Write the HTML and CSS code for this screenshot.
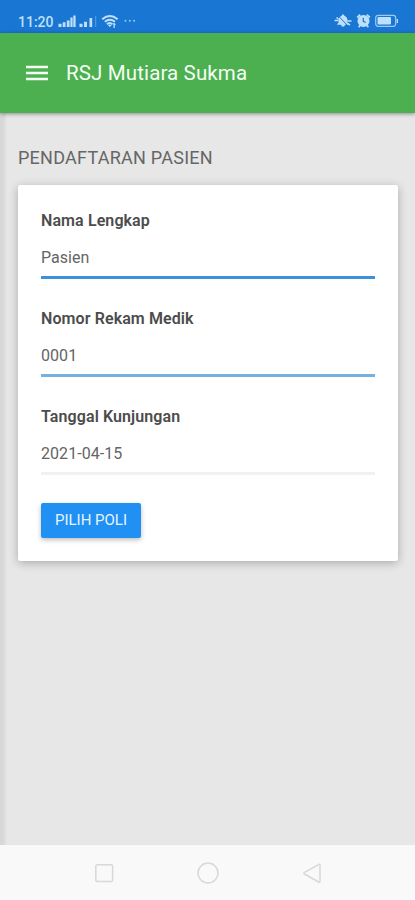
FILE: index.html
```html
<!DOCTYPE html>
<html lang="id">
<head>
<meta charset="utf-8">
<meta name="viewport" content="width=device-width, initial-scale=1">
<title>RSJ Mutiara Sukma</title>
<link rel="stylesheet" href="styles.css">
</head>
<body>
<div class="screen">
  <div class="status">
    <span class="clock">11:20</span>
    <svg class="signals" width="80" height="16" viewBox="0 0 80 16" fill="currentColor">
      <path d="M.5 10.800h3V14h-3zM4.700 9.300h2.800V14H4.700zM8.800 7.500h2.800V14H8.800zM12.400 4.500h2.200V14h-2.200zM15.300 2.500h2.300V14h-2.300z"/>
      <path d="M21.500 10.800h3V14h-3zM26 8.800h3V14h-3zM31.500 5h2.700v9h-2.700z"/>
      <path d="M37.200 3h1v11h-1z" opacity=".4"/>
      <g fill="none" stroke="currentColor" stroke-width="2">
        <path d="M44.200 6.200q7.700-6.400 15.400 0M46.800 8.800q5.100-4.200 10.200 0M49 11.200q2.900-2.400 5.400 0"/>
      </g>
      <path d="M50 12.200q1.800-1.400 3.600 0L51.800 14zM56 9.500l2 2.200h-1.200V15h-1.300v-3.500H54.500z"/>
      <g opacity=".75"><circle cx="67.500" cy="7.800" r="1"/><circle cx="71.800" cy="7.800" r="1"/><circle cx="76.100" cy="7.800" r="1"/></g>
    </svg>
    <svg class="system" width="66" height="16" viewBox="0 0 66 16">
      <path d="M10 1.500c.9 0 1.300.5 1.300 1.200 2 .8 3.200 2.300 3.200 4.300v2.500l1.500 2.300H12q-.3 2-2 2t-2-2H4L5.500 9.500V7c0-2 1.200-3.500 3.200-4.300 0-.7.400-1.200 1.300-1.200z" fill="currentColor"/>
      <path d="M4.500 2l11 11.500" stroke="#1976d2" stroke-width="1"/>
      <path d="M1.500 7.500H5.500M14.500 8h4M3.500 4.500l2 1.500M14.500 10.500l2.500 1.500" stroke="currentColor" stroke-width="1.500"/>
      <circle cx="30.500" cy="8" r="6" fill="currentColor"/>
      <path d="M24.200 4.500l3-2.800M33.800 1.700l3 2.800M27 12.500l-1.300 1.800M34 12.500l1.300 1.800" stroke="currentColor" stroke-width="1.800"/>
      <path d="M30.300 4.800v3.500l2.400 1.200" fill="none" stroke="#1976d2" stroke-width="1.200"/>
      <rect x="42.700" y="2.300" width="20" height="11" rx="2.500" fill="none" stroke="currentColor" stroke-width="1.200" opacity=".8"/>
      <rect x="44.500" y="4" width="13.500" height="7.600" rx="1" fill="currentColor"/>
      <path d="M64.300 6v4" stroke="currentColor" stroke-width="1.300"/>
    </svg>
  </div>
  <header class="appbar">
    <svg class="menu" width="22" height="16" viewBox="0 0 22 16"><path d="M0 2h22M0 8h22M0 14h22" stroke="#f4fff4" stroke-width="2.300"/></svg>
    <span class="title">RSJ Mutiara Sukma</span>
  </header>
  <main class="content">
    <h1 class="heading">PENDAFTARAN PASIEN</h1>
    <form class="card">
      <div class="field">
        <span class="label">Nama Lengkap</span>
        <div class="value">Pasien</div>
      </div>
      <div class="field">
        <span class="label">Nomor Rekam Medik</span>
        <div class="value value-record">0001</div>
      </div>
      <div class="field">
        <span class="label">Tanggal Kunjungan</span>
        <div class="value value-date">2021-04-15</div>
      </div>
      <button class="button" type="button">PILIH POLI</button>
    </form>
  </main>
  <nav class="navbar">
    <svg width="24" height="24" viewBox="0 0 24 24"><rect x="3.800" y="3.800" width="16.800" height="16.800" rx="1.500"/></svg>
    <svg width="24" height="24" viewBox="0 0 24 24"><circle cx="12" cy="12" r="10"/></svg>
    <svg width="24" height="24" viewBox="0 0 24 24"><path d="M18.500 3.600Q20 2.700 20 4.200V20.300Q20 21.800 18.500 21L4.500 13Q3.200 12.200 4.500 11.400Z"/></svg>
  </nav>
</div>
</body>
</html>
```
FILE: styles.css
```css
* {
  box-sizing: border-box;
}

body {
  margin: 0;
  font-family: Roboto, "Liberation Sans", sans-serif;
}

svg {
  display: block;
  flex: none;
}

.screen {
  display: flex;
  flex-direction: column;
  height: 900px;
  overflow: hidden;
  background: #e7e7e7;
}

.status {
  display: flex;
  align-items: flex-start;
  height: 33px;
  padding: 13px 16px 0 18px;
  background: #1976d2;
  color: #bfe0fa;
}

.clock {
  width: 40px;
  padding-top: 1px;
  font-size: 14px;
  font-weight: 500;
  line-height: 17px;
}

.system {
  margin-left: auto;
}

.appbar {
  display: flex;
  align-items: center;
  gap: 18px;
  height: 80px;
  padding-left: 26px;
  background: #4caf50;
  color: #f4fff4;
  box-shadow: 0 1px 4px rgba(0, 0, 0, 0.4);
  z-index: 1;
}

.title {
  font-size: 20.500px;
  line-height: 24px;
  letter-spacing: 0.13px;
}

.content {
  flex: 1;
  padding: 33px 17px 0 18px;
  background: linear-gradient(to right, #d7d7d7 0, #dadada 4px, #e7e7e7 7px);
}

.heading {
  margin: 0 0 15px;
  font-size: 18px;
  font-weight: 400;
  line-height: 24px;
  letter-spacing: 0.25px;
  color: #666;
  white-space: nowrap;
}

.card {
  height: 376px;
  padding: 23px 23px 0;
  border-radius: 2px;
  background: #fff;
  box-shadow: 0 2px 10px rgba(0, 0, 0, 0.27);
}

.field {
  height: 98px;
}

.label {
  display: block;
  height: 24px;
  font-size: 16px;
  font-weight: 600;
  line-height: 26px;
  letter-spacing: 0.1px;
  color: #4c4c4c;
}

.value {
  height: 47px;
  border-bottom: 3px solid #3d91d8;
  padding-top: 14px;
  font-size: 16px;
  line-height: 24px;
  letter-spacing: 0.05px;
  color: #646464;
}

.value-record {
  border-bottom-color: #74b0e0;
}

.value-date {
  border-bottom-color: #f1f1f1;
}

.button {
  display: block;
  width: 100px;
  height: 35px;
  margin-top: 1px;
  padding: 0;
  border: 0;
  border-radius: 2px;
  background: #2090f2;
  color: #e6f5ff;
  font: 400 15px/35px Roboto, "Liberation Sans", sans-serif;
  box-shadow: 0 2px 5px rgba(0, 0, 0, 0.26);
}

.navbar {
  display: flex;
  justify-content: center;
  gap: 80px;
  height: 55px;
  padding-top: 16px;
  background: #f9f9f9;
  fill: none;
  stroke: #d8d8d8;
  stroke-width: 1.500;
}
```
